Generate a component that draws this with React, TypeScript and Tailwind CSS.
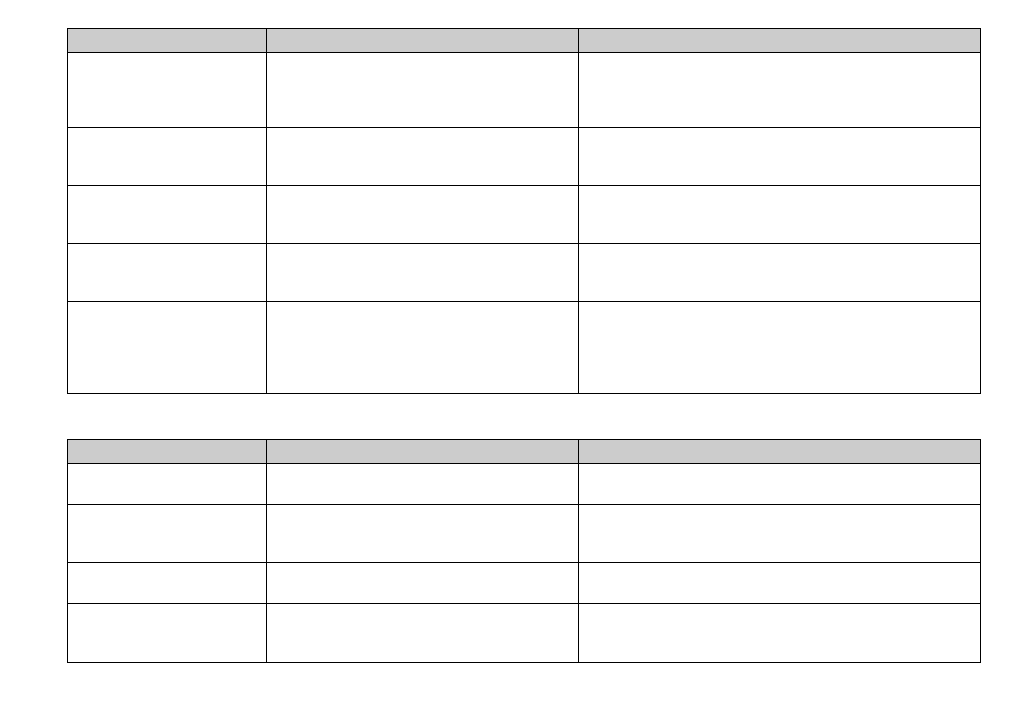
const cols = "grid grid-cols-[199px_312px_402px]";

interface GridTableProps {
  rows: number[];
}

const GridTable = ({ rows }: GridTableProps) => (
  <div className="w-fit border-l border-t border-black">
    <div className={`${cols} h-[24px] bg-[#cccccc]`}>
      <div className="border-b border-r border-black" />
      <div className="border-b border-r border-black" />
      <div className="border-b border-r border-black" />
    </div>
    {rows.map((h, i) => (
      <div key={i} className={cols} style={{ height: h }}>
        <div className="border-b border-r border-black bg-white" />
        <div className="border-b border-r border-black bg-white" />
        <div className="border-b border-r border-black bg-white" />
      </div>
    ))}
  </div>
);

export default function App() {
  return (
    <div className="min-h-[726px] w-[1032px] bg-white pl-[67px] pt-[28px] font-['Liberation_Sans',sans-serif]">
      <GridTable rows={[75, 58, 58, 58, 92]} />
      <div className="mt-[45px]">
        <GridTable rows={[41, 58, 41, 59]} />
      </div>
    </div>
  );
}
